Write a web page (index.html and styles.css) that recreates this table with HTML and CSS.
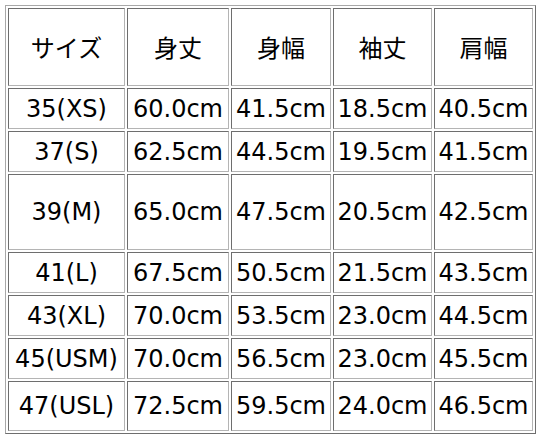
FILE: index.html
```html
<!DOCTYPE html>
<html lang="ja">
<head>
<meta charset="utf-8">
<link rel="stylesheet" href="styles.css">
</head>
<body>
<table class="size-table">
  <tr class="row-head">
    <td class="c1">サイズ</td>
    <td class="c2">身丈</td>
    <td class="c3">身幅</td>
    <td class="c4">袖丈</td>
    <td class="c5">肩幅</td>
  </tr>
  <tr class="row-std"><td>35(XS)</td><td>60.0cm</td><td>41.5cm</td><td>18.5cm</td><td>40.5cm</td></tr>
  <tr class="row-std"><td>37(S)</td><td>62.5cm</td><td>44.5cm</td><td>19.5cm</td><td>41.5cm</td></tr>
  <tr class="row-tall"><td>39(M)</td><td>65.0cm</td><td>47.5cm</td><td>20.5cm</td><td>42.5cm</td></tr>
  <tr class="row-std"><td>41(L)</td><td>67.5cm</td><td>50.5cm</td><td>21.5cm</td><td>43.5cm</td></tr>
  <tr class="row-std"><td>43(XL)</td><td>70.0cm</td><td>53.5cm</td><td>23.0cm</td><td>44.5cm</td></tr>
  <tr class="row-std"><td>45(USM)</td><td>70.0cm</td><td>56.5cm</td><td>23.0cm</td><td>45.5cm</td></tr>
  <tr class="row-last"><td>47(USL)</td><td>72.5cm</td><td>59.5cm</td><td>24.0cm</td><td>46.5cm</td></tr>
</table>
</body>
</html>
```
FILE: styles.css
```css
html, body {
  margin: 0;
  padding: 0;
  background: #ffffff;
}
body {
  padding: 5px;
}
.size-table {
  border-collapse: separate;
  border-spacing: 2px;
  border: 1px solid;
  border-color: #a8a8a8 #6e6e6e #6e6e6e #a8a8a8;
  table-layout: fixed;
  width: 531px;
  font-family: "DejaVu Sans", Verdana, "Noto Sans CJK JP", sans-serif;
  font-size: 24px;
  color: #000;
}
.size-table td {
  box-sizing: border-box;
  border: 1px solid;
  border-color: #6e6e6e #b4b4b4 #b4b4b4 #6e6e6e;
  padding: 0;
  text-align: center;
  vertical-align: middle;
  white-space: nowrap;
  line-height: 1;
}
.row-head td {
  font-family: "Noto Sans CJK JP", sans-serif;
  font-weight: 400;
}
.c1 { width: 117px; }
.c2 { width: 102px; }
.c3 { width: 100px; }
.c4 { width: 99px; }
.c5 { width: 99px; }
.row-head td { height: 78px; }
.row-std td { height: 41px; }
.row-tall td { height: 76px; }
.row-last td { height: 50px; }
```
